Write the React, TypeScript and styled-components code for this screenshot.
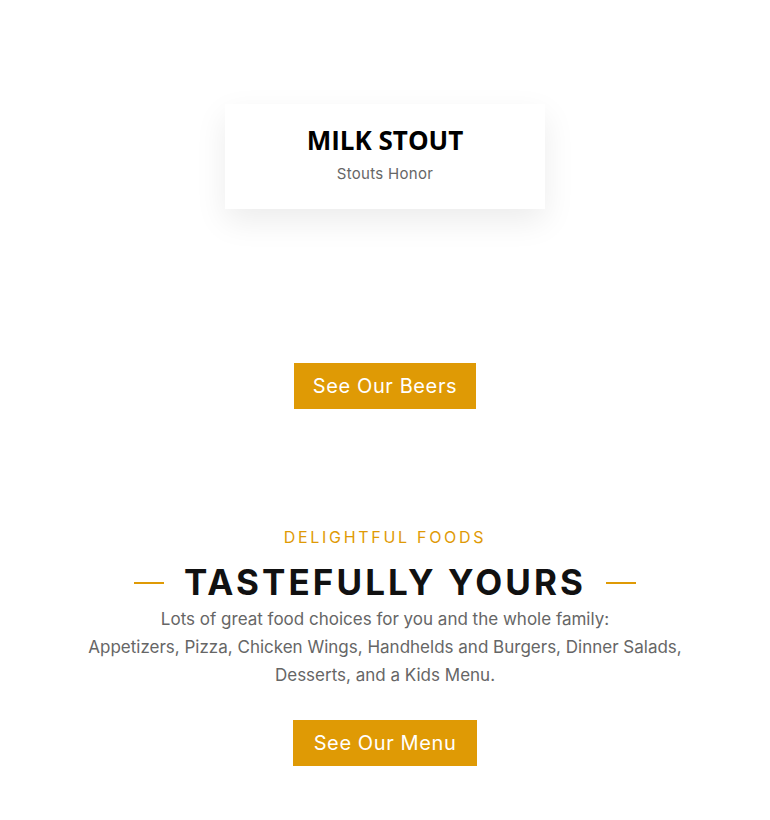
import React from "react";
import styled, { createGlobalStyle } from "styled-components";

const Global = createGlobalStyle`
  html, body { margin: 0; padding: 0; background: #fff; }
  body { font-family: "Inter", "Open Sans", sans-serif; }
`;

const Page = styled.div`
  width: 770px;
  display: flex;
  flex-direction: column;
  align-items: center;
`;

const Card = styled.div`
  margin-top: 104px;
  width: 320px;
  height: 105px;
  box-sizing: border-box;
  background: #fff;
  box-shadow: 0 12px 30px rgba(0, 0, 0, 0.08);
  display: flex;
  flex-direction: column;
  align-items: center;
  padding-top: 20px;
`;

const CardTitle = styled.div`
  font-family: "Open Sans", sans-serif;
  font-weight: 700;
  font-size: 26px;
  line-height: 32px;
  color: #000;
`;

const CardSub = styled.div`
  margin-top: 9px;
  font-size: 15px;
  line-height: 18px;
  letter-spacing: 0.3px;
  color: #666;
`;

const Button = styled.a<{ $top: number; $w: number }>`
  margin-top: ${(p) => p.$top}px;
  width: ${(p) => p.$w}px;
  height: 46px;
  background: #df9a05;
  color: #fff;
  font-size: 20px;
  letter-spacing: 0.6px;
  display: flex;
  align-items: center;
  justify-content: center;
  text-decoration: none;
`;

const Eyebrow = styled.div`
  margin-top: 117px;
  font-size: 16px;
  line-height: 22px;
  letter-spacing: 2.7px;
  color: #df9a05;
`;

const HeadingRow = styled.div`
  margin-top: 14px;
  display: flex;
  align-items: center;
  gap: 20px;
`;

const Rule = styled.span`
  width: 30px;
  height: 2px;
  margin-top: 2px;
  background: #df9a05;
`;

const Heading = styled.h2`
  margin: 0;
  font-size: 35px;
  line-height: 40px;
  font-weight: 700;
  letter-spacing: 3.1px;
  color: #111;
`;

const Para = styled.p`
  margin: 3px 0 0;
  font-size: 17px;
  line-height: 28px;
  color: #666;
  text-align: center;
`;

export default function App() {
  return (
    <>
      <Global />
      <Page>
        <Card>
          <CardTitle>MILK STOUT</CardTitle>
          <CardSub>Stouts Honor</CardSub>
        </Card>
        <Button href="#" $top={154} $w={182}>See Our Beers</Button>
        <Eyebrow>DELIGHTFUL FOODS</Eyebrow>
        <HeadingRow>
          <Rule />
          <Heading>TASTEFULLY YOURS</Heading>
          <Rule />
        </HeadingRow>
        <Para>
          Lots of great food choices for you and the whole family:
          <br />
          Appetizers, Pizza, Chicken Wings, Handhelds and Burgers, Dinner Salads,
          <br />
          Desserts, and a Kids Menu.
        </Para>
        <Button href="#" $top={31} $w={184}>See Our Menu</Button>
      </Page>
    </>
  );
}
